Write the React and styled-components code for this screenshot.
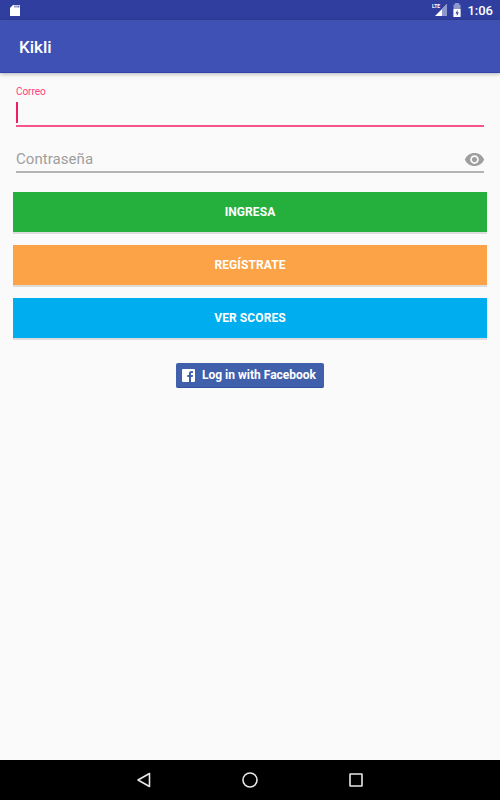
import React from 'react';
import styled, { createGlobalStyle } from 'styled-components';

const Global = createGlobalStyle`
  html, body { margin: 0; padding: 0; }
  body { background: #fafafa; font-family: Roboto, "Liberation Sans", sans-serif; }
`;

const Screen = styled.div`
  width: 500px;
  height: 800px;
  display: flex;
  flex-direction: column;
  overflow: hidden;
  background: #fafafa;
`;

const StatusBar = styled.div`
  height: 20px;
  flex: none;
  background: #303f9f;
  display: flex;
  align-items: center;
  justify-content: space-between;
  padding: 0 7px 0 9px;
  box-sizing: border-box;
`;

const StatusRight = styled.div`
  display: flex;
  align-items: center;
  gap: 6px;
`;

const Clock = styled.span`
  color: #fff;
  font-size: 13px;
  font-weight: 500;
`;

const AppBar = styled.header`
  height: 53px;
  flex: none;
  background: #3f51b5;
  border-bottom: 1px solid #2f43b0;
  box-sizing: border-box;
  box-shadow: 0 1px 4px rgba(0, 0, 0, 0.3);
  display: flex;
  align-items: center;
  padding: 1px 0 0 19px;
  color: #fff;
  font-size: 17px;
  font-weight: 500;
`;

const Content = styled.main`
  flex: 1;
  display: flex;
  flex-direction: column;
  padding: 12px 13px 0;
`;

const Field = styled.div`
  margin: ${({ $top }) => $top}px 3px 0;
  height: ${({ $height }) => $height}px;
  display: flex;
  flex-direction: column;
  justify-content: flex-end;
  position: relative;
  border-bottom: 2px solid ${({ $active }) => ($active ? '#f8548b' : '#b4b4b4')};
  box-sizing: border-box;
`;

const FloatLabel = styled.label`
  position: absolute;
  top: 0;
  left: 0;
  font-size: 10px;
  line-height: 13px;
  letter-spacing: -0.05px;
  color: #ff4081;
`;

const Caret = styled.span`
  width: 2px;
  height: 21px;
  margin-bottom: 2px;
  background: #e91e63;
`;

const PasswordRow = styled.div`
  display: flex;
  align-items: center;
  justify-content: space-between;
  height: 26px;
  margin-bottom: -1px;
`;

const Placeholder = styled.span`
  font-size: 15px;
  letter-spacing: 0.05px;
  color: #9e9e9e;
`;

const Action = styled.button`
  display: block;
  width: 100%;
  height: 42px;
  border: 0;
  border-bottom: 2px solid #dcdcdc;
  padding: 0;
  background-clip: padding-box;
  background-color: ${({ $color }) => $color};
  box-sizing: border-box;
  color: #fff;
  font-family: inherit;
  font-size: 12px;
  font-weight: 700;
  letter-spacing: 0.1px;
  margin-top: ${({ $top }) => $top}px;
`;

const FacebookButton = styled.button`
  align-self: center;
  width: 148px;
  height: 25px;
  margin-top: 23px;
  padding: 0 0 0 6px;
  border: 0;
  border-bottom: 1px solid #2f4f9f;
  border-radius: 2px;
  background: #4060ac;
  box-sizing: border-box;
  color: #fff;
  display: flex;
  align-items: center;
  gap: 7px;
  font-family: inherit;
  font-size: 12px;
  font-weight: 700;
`;

const NavBar = styled.nav`
  height: 40px;
  flex: none;
  background: #000;
  display: flex;
  align-items: center;
  justify-content: space-between;
  padding: 0 135px;
`;

const NavIcon = ({ children }) => (
  <svg width="18" height="18" viewBox="0 0 18 18" fill="none" stroke="#e8e8e8" strokeWidth="1.6">
    {children}
  </svg>
);

export default function App() {
  return (
    <>
      <Global />
      <Screen>
        <StatusBar>
          <svg width="12" height="13" viewBox="0 0 12 13">
            <path d="M4 1h7v11H1V4z" fill="#fff" />
            <path d="M6 1.500v2M8 1.500v2M9.800 1.500v2" stroke="#303f9f" strokeWidth="1" />
          </svg>
          <StatusRight>
            <svg width="15" height="14" viewBox="0 0 15 14">
              <path d="M15 1v12H3z" fill="#fff" />
              <path d="M15 1v12h-5V6z" fill="#8f98cc" />
              <rect x="0" y="0" width="9" height="6" fill="#303f9f" />
              <text x="0" y="5" fontSize="5" fontWeight="700" fontFamily="Roboto, sans-serif" fill="#fff">LTE</text>
            </svg>
            <svg width="8" height="14" viewBox="1 0 8 14">
              <path d="M3 0h4v1.500h1.500V14h-7V1.500H3z" fill="#8f98cc" />
              <path d="M1.500 6h7v8h-7z" fill="#fff" />
              <path d="M5.500 7L3.500 10.500h1.300V13l2-3.600H5.500z" fill="#303f9f" />
            </svg>
            <Clock>1:06</Clock>
          </StatusRight>
        </StatusBar>
        <AppBar>Kikli</AppBar>
        <Content>
          <Field $active $top={0} $height={42}>
            <FloatLabel>Correo</FloatLabel>
            <Caret />
          </Field>
          <Field $top={15} $height={31}>
            <PasswordRow>
              <Placeholder>Contraseña</Placeholder>
              <svg width="21" height="21" viewBox="0 0 24 24" fill="#9e9e9e" style={{ marginRight: -1 }}>
                <path d="M12 4.500C7 4.500 2.730 7.610 1 12c1.730 4.390 6 7.500 11 7.500s9.270-3.110 11-7.500c-1.730-4.390-6-7.500-11-7.500zM12 17c-2.760 0-5-2.240-5-5s2.240-5 5-5 5 2.240 5 5-2.240 5-5 5zm0-8c-1.660 0-3 1.340-3 3s1.340 3 3 3 3-1.340 3-3-1.340-3-3-3z" />
              </svg>
            </PasswordRow>
          </Field>
          <Action $color="#25b03e" $top={19}>INGRESA</Action>
          <Action $color="#fba346" $top={11}>REGÍSTRATE</Action>
          <Action $color="#00aeef" $top={11}>VER SCORES</Action>
          <FacebookButton>
            <svg width="13" height="13" viewBox="0 0 13 13">
              <path fillRule="evenodd" d="M1 0h11a1 1 0 0 1 1 1v11a1 1 0 0 1-1 1H9V8h1.700l.3-2H9V5c0-.7.3-1 1-1h1V2.200C10.600 2.100 10 2 9.400 2 7.900 2 7 3 7 4.600V6H5.300v2H7v5H1a1 1 0 0 1-1-1V1a1 1 0 0 1 1-1z" fill="#fff" />
            </svg>
            Log in with Facebook
          </FacebookButton>
        </Content>
        <NavBar>
          <NavIcon><path d="M14.500 2.500v13L3 9z" strokeLinejoin="round" /></NavIcon>
          <NavIcon><circle cx="9" cy="9" r="7" /></NavIcon>
          <NavIcon><rect x="3" y="3" width="12" height="12" rx="0.500" /></NavIcon>
        </NavBar>
      </Screen>
    </>
  );
}
